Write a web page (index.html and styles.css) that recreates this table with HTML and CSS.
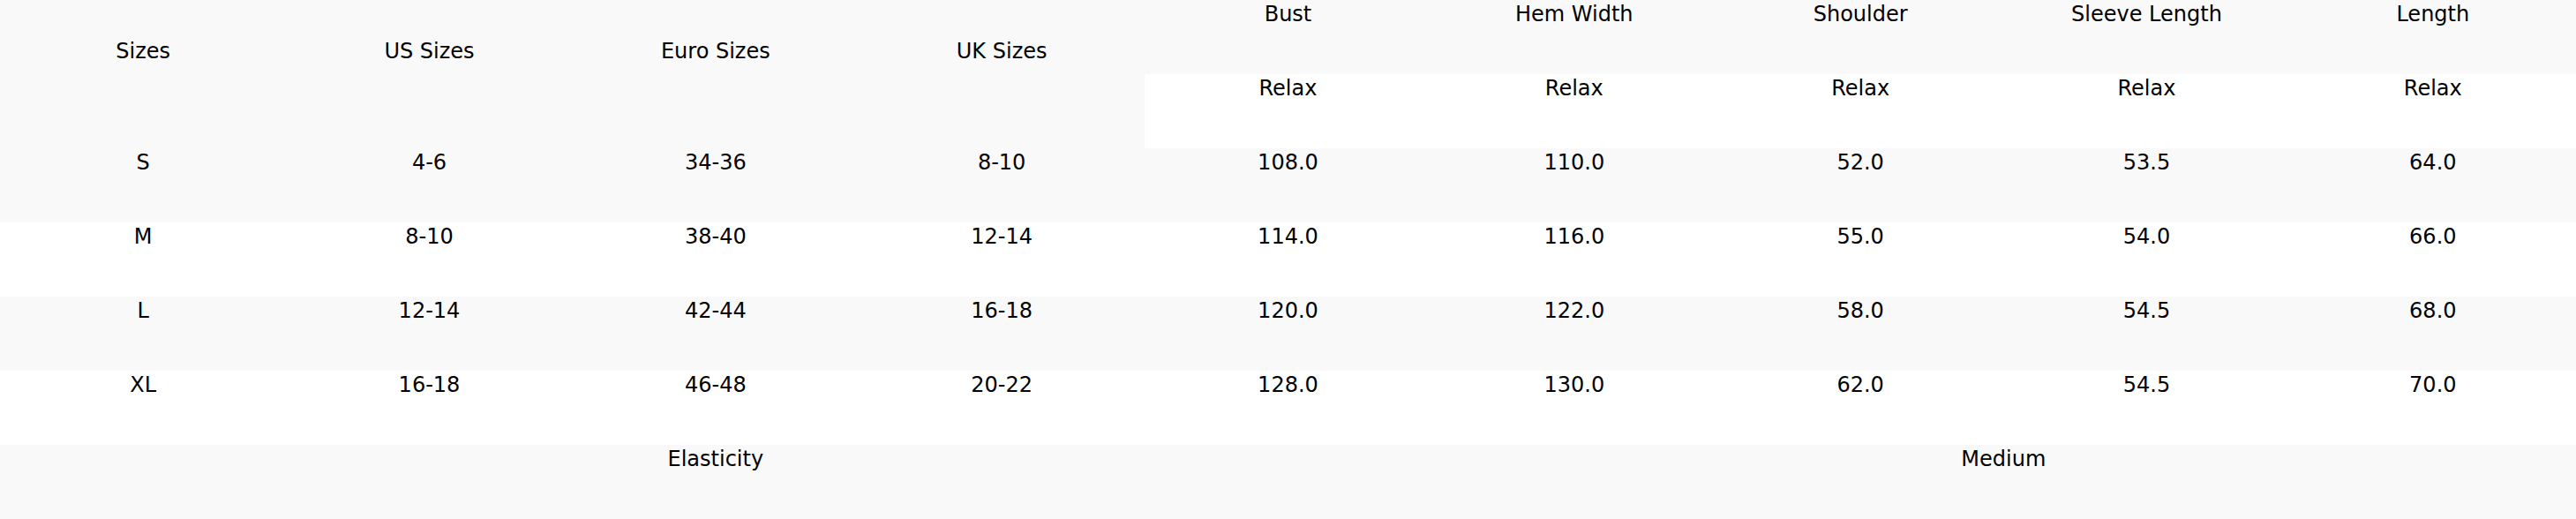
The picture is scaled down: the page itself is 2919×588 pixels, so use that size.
FILE: index.html
```html
<!DOCTYPE html>
<html>
<head>
<meta charset="utf-8">
<link rel="stylesheet" href="styles.css">
</head>
<body>
<table class="size-table">
  <tr>
    <td rowspan="2">Sizes</td>
    <td rowspan="2">US Sizes</td>
    <td rowspan="2">Euro Sizes</td>
    <td rowspan="2">UK Sizes</td>
    <td>Bust</td>
    <td>Hem Width</td>
    <td>Shoulder</td>
    <td>Sleeve Length</td>
    <td>Length</td>
  </tr>
  <tr>
    <td>Relax</td>
    <td>Relax</td>
    <td>Relax</td>
    <td>Relax</td>
    <td>Relax</td>
  </tr>
  <tr>
    <td>S</td><td>4-6</td><td>34-36</td><td>8-10</td><td>108.0</td><td>110.0</td><td>52.0</td><td>53.5</td><td>64.0</td>
  </tr>
  <tr>
    <td>M</td><td>8-10</td><td>38-40</td><td>12-14</td><td>114.0</td><td>116.0</td><td>55.0</td><td>54.0</td><td>66.0</td>
  </tr>
  <tr>
    <td>L</td><td>12-14</td><td>42-44</td><td>16-18</td><td>120.0</td><td>122.0</td><td>58.0</td><td>54.5</td><td>68.0</td>
  </tr>
  <tr>
    <td>XL</td><td>16-18</td><td>46-48</td><td>20-22</td><td>128.0</td><td>130.0</td><td>62.0</td><td>54.5</td><td>70.0</td>
  </tr>
  <tr>
    <td colspan="5">Elasticity</td>
    <td colspan="4">Medium</td>
  </tr>
</table>
</body>
</html>
```
FILE: styles.css
```css
html, body {
  margin: 0;
  padding: 0;
  background: #ffffff;
}

.size-table {
  width: 100%;
  table-layout: fixed;
  border-collapse: collapse;
  border-spacing: 0;
  font-family: "DejaVu Sans", sans-serif;
  font-size: 24px;
  color: #000000;
}

.size-table tr:nth-child(odd) {
  background: #f9f9f9;
}

.size-table tr:nth-child(even) {
  background: #ffffff;
}

.size-table td {
  padding: 1px 0 53px 0;
  line-height: 30px;
  text-align: center;
  vertical-align: middle;
  white-space: nowrap;
}
```
